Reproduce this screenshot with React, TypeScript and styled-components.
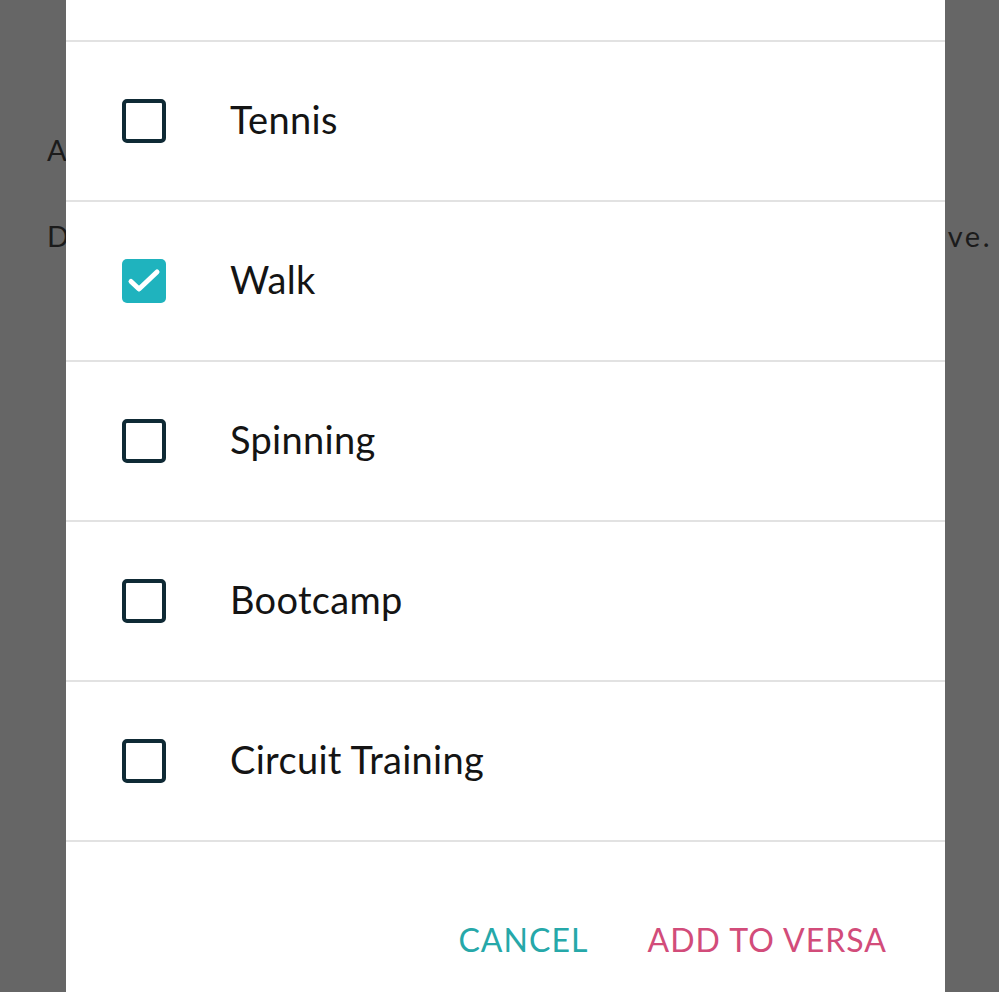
import React from "react";
import styled, { createGlobalStyle } from "styled-components";

const Global = createGlobalStyle`
  html, body { margin: 0; padding: 0; }
  body {
    background: #666666;
    font-family: "Lato", "Noto Sans", sans-serif;
    overflow: hidden;
  }
`;

const Page = styled.div`
  position: relative;
  width: 999px;
  height: 992px;
  overflow: hidden;
  background: #666666;
`;

const Behind = styled.div`
  padding: 133px 7px 0 47px;
  display: flex;
  flex-direction: column;
  gap: 52px;
  color: #1b1b1b;
  font-size: 29px;
  line-height: 34px;
  letter-spacing: 2.5px;
`;

const BehindLine = styled.div`
  display: flex;
  justify-content: space-between;
  white-space: nowrap;
`;

const Dialog = styled.div`
  position: absolute;
  top: 0;
  left: 66px;
  width: 879px;
  height: 992px;
  background: #ffffff;
  display: flex;
  flex-direction: column;
`;

const TopSpacer = styled.div`
  height: 40px;
  flex: none;
`;

const Row = styled.div`
  flex: none;
  height: 158px;
  border-top: 2px solid #e2e2e2;
  display: flex;
  align-items: center;
  padding-left: 56px;
  gap: 64px;
`;

const Box = styled.div<{ $checked?: boolean }>`
  width: 44px;
  height: 44px;
  box-sizing: border-box;
  border-radius: 5px;
  flex: none;
  display: flex;
  align-items: center;
  justify-content: center;
  background: ${(p) => (p.$checked ? "#1fb3be" : "transparent")};
  border: ${(p) => (p.$checked ? "none" : "4px solid #0f2a35")};
`;

const Label = styled.span`
  font-size: 38px;
  line-height: 44px;
  padding-bottom: 4px;
  color: #141414;
  letter-spacing: 0.3px;
`;

const Footer = styled.div`
  flex: none;
  border-top: 2px solid #e2e2e2;
  display: flex;
  justify-content: flex-end;
  gap: 59px;
  padding: 78px 58px 0 0;
`;

const Action = styled.button<{ $tone: string }>`
  background: none;
  border: none;
  padding: 0;
  font-family: "Lato", "Noto Sans", sans-serif;
  font-size: 32px;
  line-height: 40px;
  letter-spacing: 1.05px;
  color: ${(p) => p.$tone};
  cursor: pointer;
`;

const items = [
  { name: "Tennis", checked: false },
  { name: "Walk", checked: true },
  { name: "Spinning", checked: false },
  { name: "Bootcamp", checked: false },
  { name: "Circuit Training", checked: false },
];

const Check = () => (
  <svg width="44" height="44" viewBox="0 0 44 44" fill="none">
    <path
      d="M9 22.5 L17 30 L35 13"
      stroke="#ffffff"
      strokeWidth="5"
      strokeLinecap="round"
      strokeLinejoin="round"
    />
  </svg>
);

export default function App() {
  return (
    <Page>
      <Global />
      <Behind>
        <BehindLine>
          <span>Add or remove exercise shortcuts.</span>
        </BehindLine>
        <BehindLine>
          <span>Drag and drop</span>
          <span>to move.</span>
        </BehindLine>
      </Behind>
      <Dialog>
        <TopSpacer />
        {items.map((it) => (
          <Row key={it.name}>
            <Box $checked={it.checked}>{it.checked && <Check />}</Box>
            <Label>{it.name}</Label>
          </Row>
        ))}
        <Footer>
          <Action $tone="#26a8a9">CANCEL</Action>
          <Action $tone="#d24c7a">ADD TO VERSA</Action>
        </Footer>
      </Dialog>
    </Page>
  );
}
